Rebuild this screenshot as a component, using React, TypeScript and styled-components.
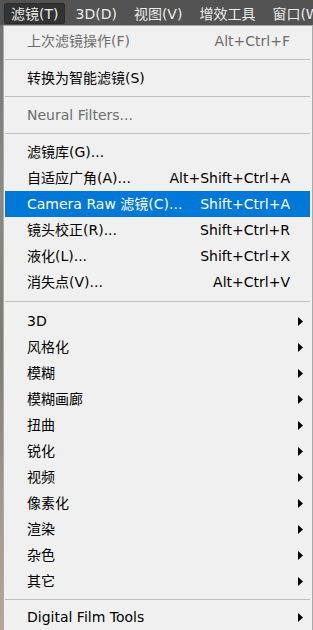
import React from "react";
import styled, { createGlobalStyle } from "styled-components";

const GlobalStyle = createGlobalStyle`
  html, body {
    margin: 0;
    padding: 0;
  }
  body {
    background: #5a5a5a;
    font-family: "DejaVu Sans", "Noto Sans CJK SC", sans-serif;
  }
`;

const Page = styled.div`
  width: 313px;
  height: 630px;
  overflow: hidden;
  display: flex;
  flex-direction: column;
  background: linear-gradient(
    180deg,
    #6e6e6e 0%,
    #8c8a86 30%,
    #7d7b76 55%,
    #a09a8e 80%,
    #b3a993 100%
  );
`;

const MenuBar = styled.div`
  height: 25px;
  flex-shrink: 0;
  display: flex;
  align-items: flex-start;
  gap: 3px;
  padding: 3px 0 0 4px;
  box-sizing: border-box;
  background: #535353;
  white-space: nowrap;
`;

const MenuTitle = styled.div<{ $active?: boolean }>`
  height: 21px;
  line-height: 20px;
  padding: 0 6px;
  font-size: 14px;
  color: #ececec;
  border-radius: 2px;
  box-sizing: border-box;
  background: ${(p) => (p.$active ? "#333333" : "transparent")};
  border: 1px solid ${(p) => (p.$active ? "#2b2b2b" : "transparent")};
`;

const Dropdown = styled.div`
  flex: 1;
  margin-left: 3px;
  border: 1px solid #a9a9a9;
  border-bottom: none;
  background: #f0f0f0;
  padding: 2px 2px 0 1px;
`;

const Item = styled.div<{ $active?: boolean; $disabled?: boolean }>`
  height: 26px;
  display: flex;
  align-items: center;
  padding-left: 22px;
  font-size: 14px;
  white-space: nowrap;
  background: ${(p) => (p.$active ? "#0078d7" : "transparent")};
  color: ${(p) => (p.$active ? "#ffffff" : p.$disabled ? "#6d6d6d" : "#000000")};
`;

const Label = styled.span`
  flex: 1;
  line-height: 26px;
`;

const Shortcut = styled.span`
  line-height: 26px;
`;

const ArrowSlot = styled.span`
  width: 20px;
  height: 26px;
  display: flex;
  align-items: center;
  justify-content: flex-end;
  padding-right: 7px;
  box-sizing: border-box;
`;

const Separator = styled.div<{ $space: number }>`
  height: ${(p) => p.$space}px;
  display: flex;
  align-items: center;

  &::after {
    content: "";
    display: block;
    width: 100%;
    height: 1px;
    background: #bdbdbd;
  }
`;

const SubArrow = () => (
  <svg width="5" height="9" viewBox="0 0 5 9">
    <path d="M0 0 L5 4.5 L0 9 Z" fill="#000" />
  </svg>
);

type Entry =
  | { kind: "item"; label: string; shortcut?: string; sub?: boolean; disabled?: boolean; active?: boolean }
  | { kind: "sep"; space: number };

const entries: Entry[] = [
  { kind: "item", label: "上次滤镜操作(F)", shortcut: "Alt+Ctrl+F", disabled: true },
  { kind: "sep", space: 11 },
  { kind: "item", label: "转换为智能滤镜(S)" },
  { kind: "sep", space: 11 },
  { kind: "item", label: "Neural Filters...", disabled: true },
  { kind: "sep", space: 11 },
  { kind: "item", label: "滤镜库(G)..." },
  { kind: "item", label: "自适应广角(A)...", shortcut: "Alt+Shift+Ctrl+A" },
  { kind: "item", label: "Camera Raw 滤镜(C)...", shortcut: "Shift+Ctrl+A", active: true },
  { kind: "item", label: "镜头校正(R)...", shortcut: "Shift+Ctrl+R" },
  { kind: "item", label: "液化(L)...", shortcut: "Shift+Ctrl+X" },
  { kind: "item", label: "消失点(V)...", shortcut: "Alt+Ctrl+V" },
  { kind: "sep", space: 13 },
  { kind: "item", label: "3D", sub: true },
  { kind: "item", label: "风格化", sub: true },
  { kind: "item", label: "模糊", sub: true },
  { kind: "item", label: "模糊画廊", sub: true },
  { kind: "item", label: "扭曲", sub: true },
  { kind: "item", label: "锐化", sub: true },
  { kind: "item", label: "视频", sub: true },
  { kind: "item", label: "像素化", sub: true },
  { kind: "item", label: "渲染", sub: true },
  { kind: "item", label: "杂色", sub: true },
  { kind: "item", label: "其它", sub: true },
  { kind: "sep", space: 10 },
  { kind: "item", label: "Digital Film Tools", sub: true },
];

const App = () => {
  return (
    <>
      <GlobalStyle />
      <Page>
        <MenuBar>
          <MenuTitle $active>滤镜(T)</MenuTitle>
          <MenuTitle>3D(D)</MenuTitle>
          <MenuTitle>视图(V)</MenuTitle>
          <MenuTitle>增效工具</MenuTitle>
          <MenuTitle>窗口(W)</MenuTitle>
        </MenuBar>
        <Dropdown>
          {entries.map((e, i) =>
            e.kind === "sep" ? (
              <Separator key={i} $space={e.space} />
            ) : (
              <Item key={i} $active={e.active} $disabled={e.disabled}>
                <Label>{e.label}</Label>
                {e.shortcut && <Shortcut>{e.shortcut}</Shortcut>}
                <ArrowSlot>{e.sub && <SubArrow />}</ArrowSlot>
              </Item>
            )
          )}
        </Dropdown>
      </Page>
    </>
  );
};

export default App;
